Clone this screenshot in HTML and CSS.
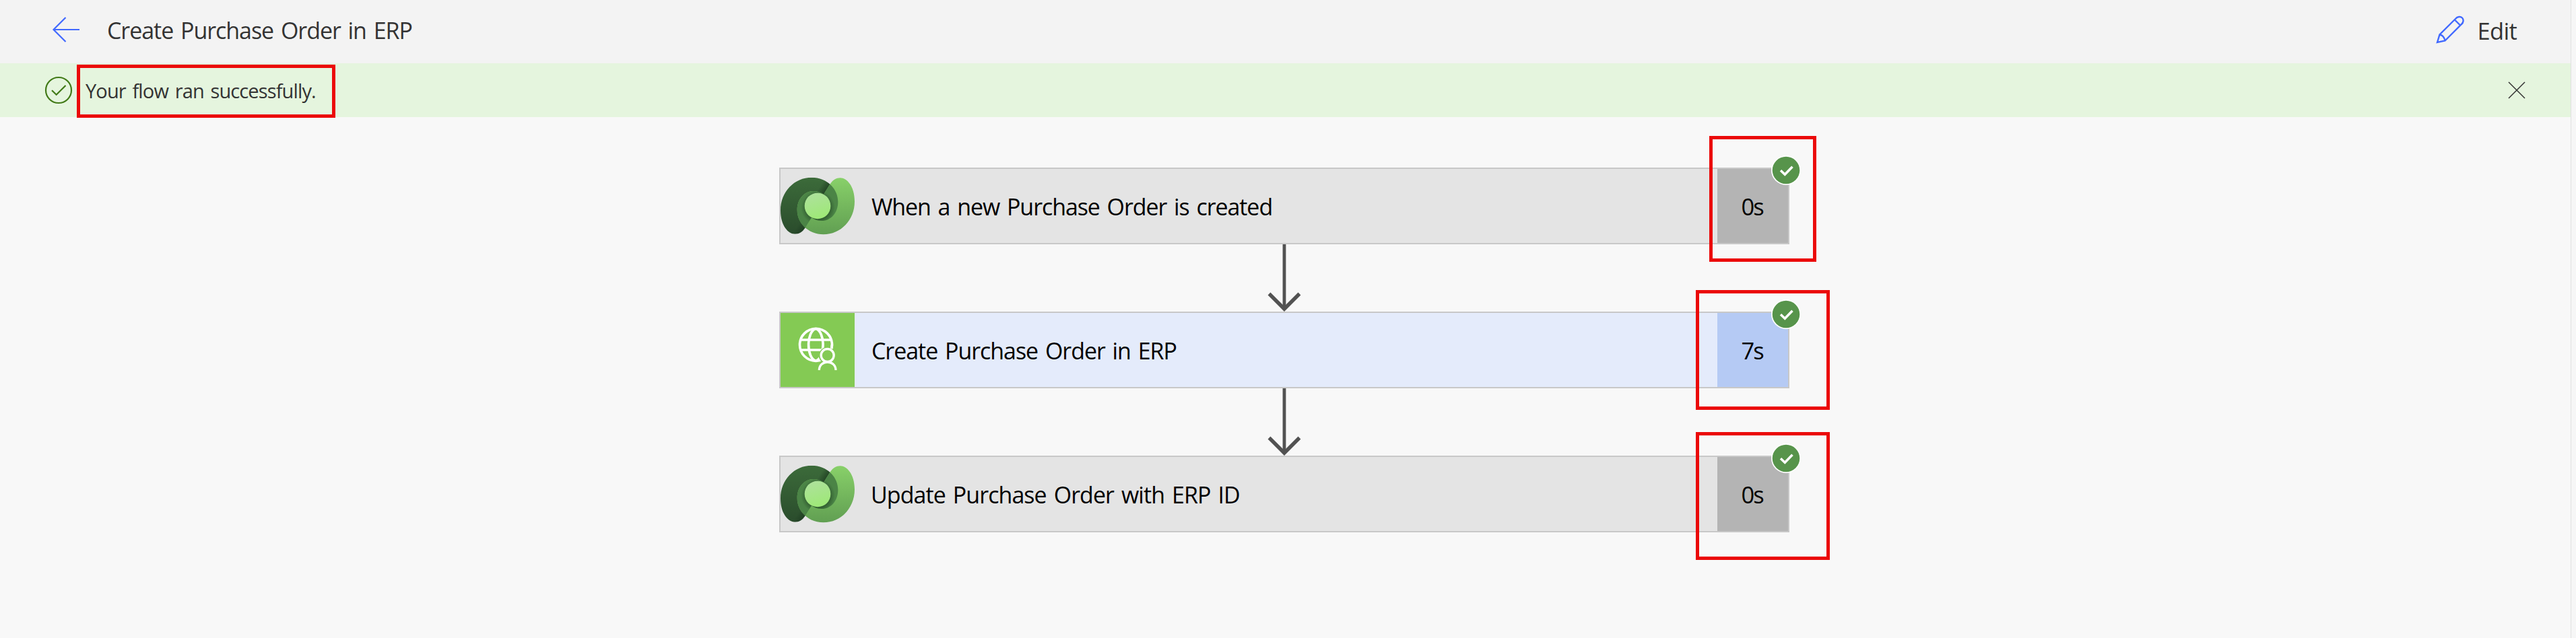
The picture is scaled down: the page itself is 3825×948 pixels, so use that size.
FILE: index.html
```html
<!DOCTYPE html>
<html lang="en">
<head>
<meta charset="utf-8">
<title>Create Purchase Order in ERP</title>
<link rel="stylesheet" href="styles.css">
</head>
<body>
<svg class="defs" width="0" height="0" aria-hidden="true">
  <defs>
    <linearGradient id="dv-dark-lower" gradientUnits="userSpaceOnUse" x1="0" y1="100" x2="0" y2="353">
      <stop offset="0" stop-color="#3c6b3a"/><stop offset="1" stop-color="#2a4c2c"/>
    </linearGradient>
    <linearGradient id="dv-light" x1="0" y1="0" x2="0" y2="1">
      <stop offset="0" stop-color="#88d069"/><stop offset="1" stop-color="#619f52"/>
    </linearGradient>
    <linearGradient id="dv-core" x1="0" y1="0" x2=".3" y2="1">
      <stop offset="0" stop-color="#afe19f"/><stop offset="1" stop-color="#9fe879"/>
    </linearGradient>
    <radialGradient id="dv-shade" gradientUnits="userSpaceOnUse" cx="224" cy="236" r="76">
      <stop offset=".65" stop-color="#16351a" stop-opacity=".5"/><stop offset="1" stop-color="#16351a" stop-opacity="0"/>
    </radialGradient>
    <linearGradient id="dv-fold" gradientUnits="userSpaceOnUse" x1="266" y1="152" x2="237" y2="134">
      <stop offset="0" stop-color="#16301a" stop-opacity=".6"/><stop offset="1" stop-color="#16301a" stop-opacity="0"/>
    </linearGradient>
    <linearGradient id="dv-fold2" gradientUnits="userSpaceOnUse" x1="178" y1="306" x2="150" y2="289">
      <stop offset="0" stop-color="#16301a" stop-opacity=".5"/><stop offset="1" stop-color="#16301a" stop-opacity="0"/>
    </linearGradient>
    <path id="dv-leaf" d="M222 228L250 175L278 130C290 112 305 103 323 103C352 103 387 140 387 208C387 292 325 355 248 355C180 355 131 304 131 247C131 197 163 162 203 162C222 162 238 168 250 177Z"/>
    <clipPath id="dv-clip"><use href="#dv-leaf"/></clipPath>
    <clipPath id="dv-clip-dark"><use href="#dv-leaf" transform="rotate(180 222 228)"/></clipPath>
    <symbol id="dataverse" viewBox="57 63 330 330">
      <g clip-path="url(#dv-clip-dark)">
        <path d="M50 90H400V370H50z" fill="url(#dv-dark-lower)"/>
        <path d="M200 90H300V180H200z" fill="url(#dv-fold)"/>
        <path d="M100 250H200V370H100z" fill="url(#dv-fold2)"/>
      </g>
      <use href="#dv-leaf" fill="url(#dv-light)"/>
      <g clip-path="url(#dv-clip)">
        <use href="#dv-leaf" transform="rotate(180 222 228)" fill="#4b8446"/>
        <g clip-path="url(#dv-clip-dark)"><circle cx="224" cy="236" r="76" fill="url(#dv-shade)"/></g>
      </g>
      <circle cx="222" cy="228" r="58" fill="url(#dv-core)"/>
    </symbol>
    <symbol id="globe" viewBox="57 45 330 330">
      <path d="M57 45h330v330H57z" fill="#84ca54"/>
      <g fill="none" stroke="#fff" stroke-width="11">
        <circle cx="214.500" cy="187" r="72"/>
        <path d="M146 165H283M146 210H283"/>
        <path d="M214 115C171 130 171 244 214 259M214 115C257 130 257 244 214 259"/>
      </g>
      <path d="M266 197A38 38 0 0 1 304 228V310H222C224 284 234 266 239 262A38 38 0 0 1 266 197z" fill="#84ca54"/>
      <g fill="none" stroke="#fff" stroke-width="10">
        <circle cx="266" cy="234" r="28.500"/>
        <path d="M229 300C230 252 302 252 303 300"/>
        <path d="M286 187Q286 196 284 204" stroke-width="11"/>
      </g>
    </symbol>
    <symbol id="badge" viewBox="0 0 44 44">
      <circle cx="22" cy="22" r="22" fill="#fff"/>
      <circle cx="22" cy="22" r="20.300" fill="#57944b"/>
      <path d="M14 22.300L20.300 28.300L31.500 16.800" fill="none" stroke="#fff" stroke-width="3.600"/>
    </symbol>
    <symbol id="arrow" viewBox="0 0 50 100">
      <path d="M25 0V96" stroke="#525252" stroke-width="4.800"/>
      <path d="M2.500 73.500L25 96L47.500 73.500" fill="none" stroke="#525252" stroke-width="5.500"/>
    </symbol>
  </defs>
</svg>
<div class="page">
  <header class="header">
    <svg class="back" width="42" height="40" viewBox="0 0 42 40"><path d="M41 20H2M20.500 2L2.500 20L20.500 38" fill="none" stroke="#4169ff" stroke-width="2.200"/></svg>
    <h1 class="title">Create Purchase Order in ERP</h1>
    <div class="edit">
      <svg width="42" height="42" viewBox="0 0 42 42" fill="none" stroke="#4169ff" stroke-width="2.400" stroke-linejoin="miter"><path d="M2 40L5.500 28.500L29 5C32 1.500 36.500 1 39 3.500C41.500 6 41 10.500 38 13L13.500 37.500ZM5.500 28.500Q12 29.500 13.500 37.500M28 6.500L36 14.500"/></svg>
      <span>Edit</span>
    </div>
  </header>
  <div class="banner">
    <svg class="ok" width="42" height="42" viewBox="0 0 42 42" fill="none" stroke="#417a17" stroke-width="2.200"><circle cx="21" cy="21" r="19"/><path d="M11 21.200L17.700 27.800L31.500 14"/></svg>
    <span class="message">Your flow ran successfully.</span>
    <svg class="close" width="26" height="26" viewBox="0 0 26 26"><path d="M1 1L25 25M25 1L1 25" stroke="#333" stroke-width="1.500"/></svg>
  </div>
  <main class="flow">
    <section class="card">
      <svg class="icon"><use href="#dataverse"/></svg>
      <span class="name">When a new Purchase Order is created</span>
      <span class="time">0s</span>
      <svg class="badge"><use href="#badge"/></svg>
    </section>
    <svg class="arrow"><use href="#arrow"/></svg>
    <section class="card action">
      <svg class="icon"><use href="#globe"/></svg>
      <span class="name">Create Purchase Order in ERP</span>
      <span class="time">7s</span>
      <svg class="badge"><use href="#badge"/></svg>
    </section>
    <svg class="arrow"><use href="#arrow"/></svg>
    <section class="card update">
      <svg class="icon"><use href="#dataverse"/></svg>
      <span class="name">Update Purchase Order with ERP ID</span>
      <span class="time">0s</span>
      <svg class="badge"><use href="#badge"/></svg>
    </section>
  </main>
</div>
<div class="mark mark-message"></div>
<div class="mark mark-first"></div>
<div class="mark mark-second"></div>
<div class="mark mark-third"></div>
</body>
</html>
```
FILE: styles.css
```css
* { box-sizing: border-box; }
body {
  margin: 0;
  position: relative;
  height: 948px;
  overflow: hidden;
  background: #f6f6f6;
  font-family: "Open Sans", "Noto Sans", sans-serif;
  font-size: 34.5px;
  color: #333;
}
.defs { position: absolute; }
svg { display: block; flex: none; }
.page {
  width: 3818px;
  height: 948px;
  background: #f8f8f8;
  border-right: 1px solid #e1e1e1;
}
.header {
  height: 94px;
  padding: 0 80px 6px 77px;
  display: flex;
  align-items: center;
  background: #f3f3f3;
}
.title {
  margin: 0 0 0 40px;
  padding-top: 2px;
  font-size: 34px;
  font-weight: 400;
  letter-spacing: -1.05px;
  word-spacing: 3px;
}
.edit {
  margin-left: auto;
  display: flex;
  align-items: center;
  gap: 20px;
  letter-spacing: -0.7px;
}
.edit span { padding-top: 2px; }
.banner {
  height: 80px;
  padding: 0 67px 0 66px;
  display: flex;
  align-items: center;
  background: #e5f5de;
}
.message {
  margin-left: 19px;
  padding-top: 1px;
  font-size: 29px;
  letter-spacing: -0.87px;
  word-spacing: 3px;
}
.close { margin-left: auto; }
.flow {
  padding-top: 75px;
  display: flex;
  flex-direction: column;
  align-items: center;
  padding-right: 3px;
}
.card {
  position: relative;
  width: 1500px;
  height: 114px;
  display: flex;
  align-items: center;
  border: 2px solid #c8c8c8;
  background: #e4e4e4;
  color: #000;
}
.icon { width: 110px; height: 110px; }
.name {
  margin-left: 25px;
  padding-top: 2px;
  font-size: 34px;
  letter-spacing: -1.08px;
  word-spacing: 3px;
}
.action .name { letter-spacing: -1.05px; }
.update .name { margin-left: 24px; letter-spacing: -0.94px; }
.time {
  width: 105px;
  height: 110px;
  margin-left: auto;
  padding-right: 2px;
  display: flex;
  align-items: center;
  justify-content: center;
  background: #b4b4b4;
  letter-spacing: -2px;
}
.action { background: #e4ebfb; }
.action .time { background: #b5caf4; }
.badge {
  position: absolute;
  top: -20px;
  right: -19px;
  width: 44px;
  height: 44px;
}
.arrow { width: 50px; height: 100px; }
.mark { position: absolute; border: 5px solid #eb0909; }
.mark-message { left: 114px; top: 96px; width: 384px; height: 79px; }
.mark-first { left: 2538px; top: 202px; width: 159px; height: 187px; }
.mark-second { left: 2518px; top: 431px; width: 199px; height: 178px; }
.mark-third { left: 2518px; top: 642px; width: 199px; height: 190px; }
```
